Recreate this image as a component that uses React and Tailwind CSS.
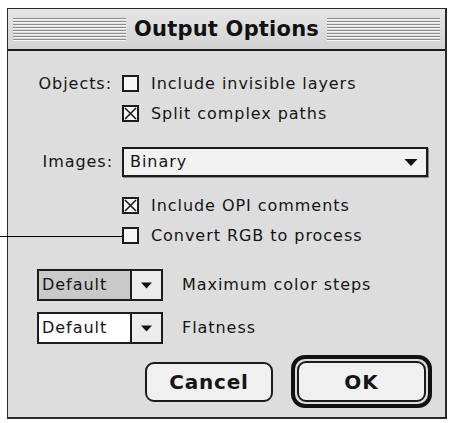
import React from 'react';

const ui = "font-['DejaVu_Sans','Liberation_Sans',sans-serif]";

const Stripes = () => (
    <div className="flex-1 flex flex-col gap-px">
        {[0, 1, 2, 3, 4, 5, 6, 7].map(i => (
            <div key={i} className="flex flex-col">
                <div className="h-px bg-[#8c8c8c]" />
                <div className="h-px bg-[#f6f6f6]" />
            </div>
        ))}
    </div>
);

const Check = ({ checked }) => (
    <div className="w-[17px] h-[17px] shrink-0 border-2 border-[#1c1c1c] bg-[#f7f7f7] flex items-center justify-center">
        {checked && (
            <svg width="13" height="13" viewBox="0 0 13 13">
                <path d="M1 1L12 12M12 1L1 12" stroke="#1c1c1c" strokeWidth="1.6" />
            </svg>
        )}
    </div>
);

const CheckRow = ({ label, checked, children }) => (
    <div className="flex items-center h-[17px]">
        <div className="w-[105px] text-right pr-[1px]">{label}</div>
        <div className="ml-[9px] flex items-center">
            <Check checked={checked} />
            <span className="ml-[12px] whitespace-nowrap">{children}</span>
        </div>
    </div>
);

const Arrow = ({ w = 13 }) => (
    <svg width={w} height="7" viewBox="0 0 13 7">
        <path d="M0 0H13L6.5 7Z" fill="#111" />
    </svg>
);

const SmallPopup = ({ fieldBg, children }) => (
    <div className="flex items-center">
        <div className="flex w-[126px] h-[32px] border-2 border-[#1c1c1c]">
            <div className={`w-[93px] border-r-2 border-[#1c1c1c] flex items-center pl-[3px] ${fieldBg}`}>Default</div>
            <div className="flex-1 bg-[#ececec] flex items-center justify-center">
                <Arrow w={11} />
            </div>
        </div>
        <span className="ml-[19px] whitespace-nowrap">{children}</span>
    </div>
);

const App = () => {
    return (
        <div className={`relative w-[451px] h-[423px] bg-white overflow-hidden text-[16px] tracking-[0.95px] text-[#151515] ${ui}`}>
            {/* callout line running into the last checkbox */}
            <div className="absolute left-0 top-[236px] w-[122px] h-px bg-black z-10" />

            <div className="ml-[7px] mt-[8px] w-[440px] h-[411px] border border-[#2a2a2a] border-r-2 border-b-2 bg-[#dddddd] flex flex-col">
                {/* title bar */}
                <div className="h-[42px] border-b-2 border-[#1c1c1c] bg-gradient-to-b from-[#e6e6e6] to-[#d2d2d2] flex items-center px-[5px]">
                    <Stripes />
                    <div className="px-[8px] text-[21px] font-bold tracking-[0.2px] leading-none text-[#111]">Output Options</div>
                    <Stripes />
                </div>

                {/* body */}
                <div className="flex flex-col pt-[24px]">
                    <CheckRow label="Objects:">Include invisible layers</CheckRow>
                    <div className="mt-[13px]">
                        <CheckRow checked>Split complex paths</CheckRow>
                    </div>

                    <div className="mt-[25px] flex items-center">
                        <div className="w-[105px] text-right">Images:</div>
                        <div className="ml-[9px] w-[306px] h-[30px] border-2 border-[#1c1c1c] bg-[#f1f1f1] shadow-[1px_1px_0_#8a8a8a] flex items-center justify-between pl-[6px] pr-[8px]">
                            <span>Binary</span>
                            <Arrow w={14} />
                        </div>
                    </div>

                    <div className="mt-[20px]">
                        <CheckRow checked>Include OPI comments</CheckRow>
                    </div>
                    <div className="mt-[13px]">
                        <CheckRow>Convert RGB to process</CheckRow>
                    </div>

                    <div className="mt-[25px] pl-[29px] flex flex-col gap-[11px]">
                        <SmallPopup fieldBg="bg-[#c9c9c9]">Maximum color steps</SmallPopup>
                        <SmallPopup fieldBg="bg-white">Flatness</SmallPopup>
                    </div>

                    <div className="mt-[11px] flex items-center justify-end pr-[13px] gap-[18px]">
                        <button className="w-[128px] h-[40px] rounded-[9px] border-2 border-[#1c1c1c] bg-[#f0f0f0] text-[20px] tracking-[0.8px] font-bold">Cancel</button>
                        <div className="w-[141px] h-[53px] rounded-[14px] border-[4px] border-[#111] p-[2px]">
                            <button className="w-full h-full rounded-[9px] border-2 border-[#1c1c1c] bg-[#f0f0f0] text-[20px] font-bold">OK</button>
                        </div>
                    </div>
                </div>
            </div>
        </div>
    );
};

export default App;
